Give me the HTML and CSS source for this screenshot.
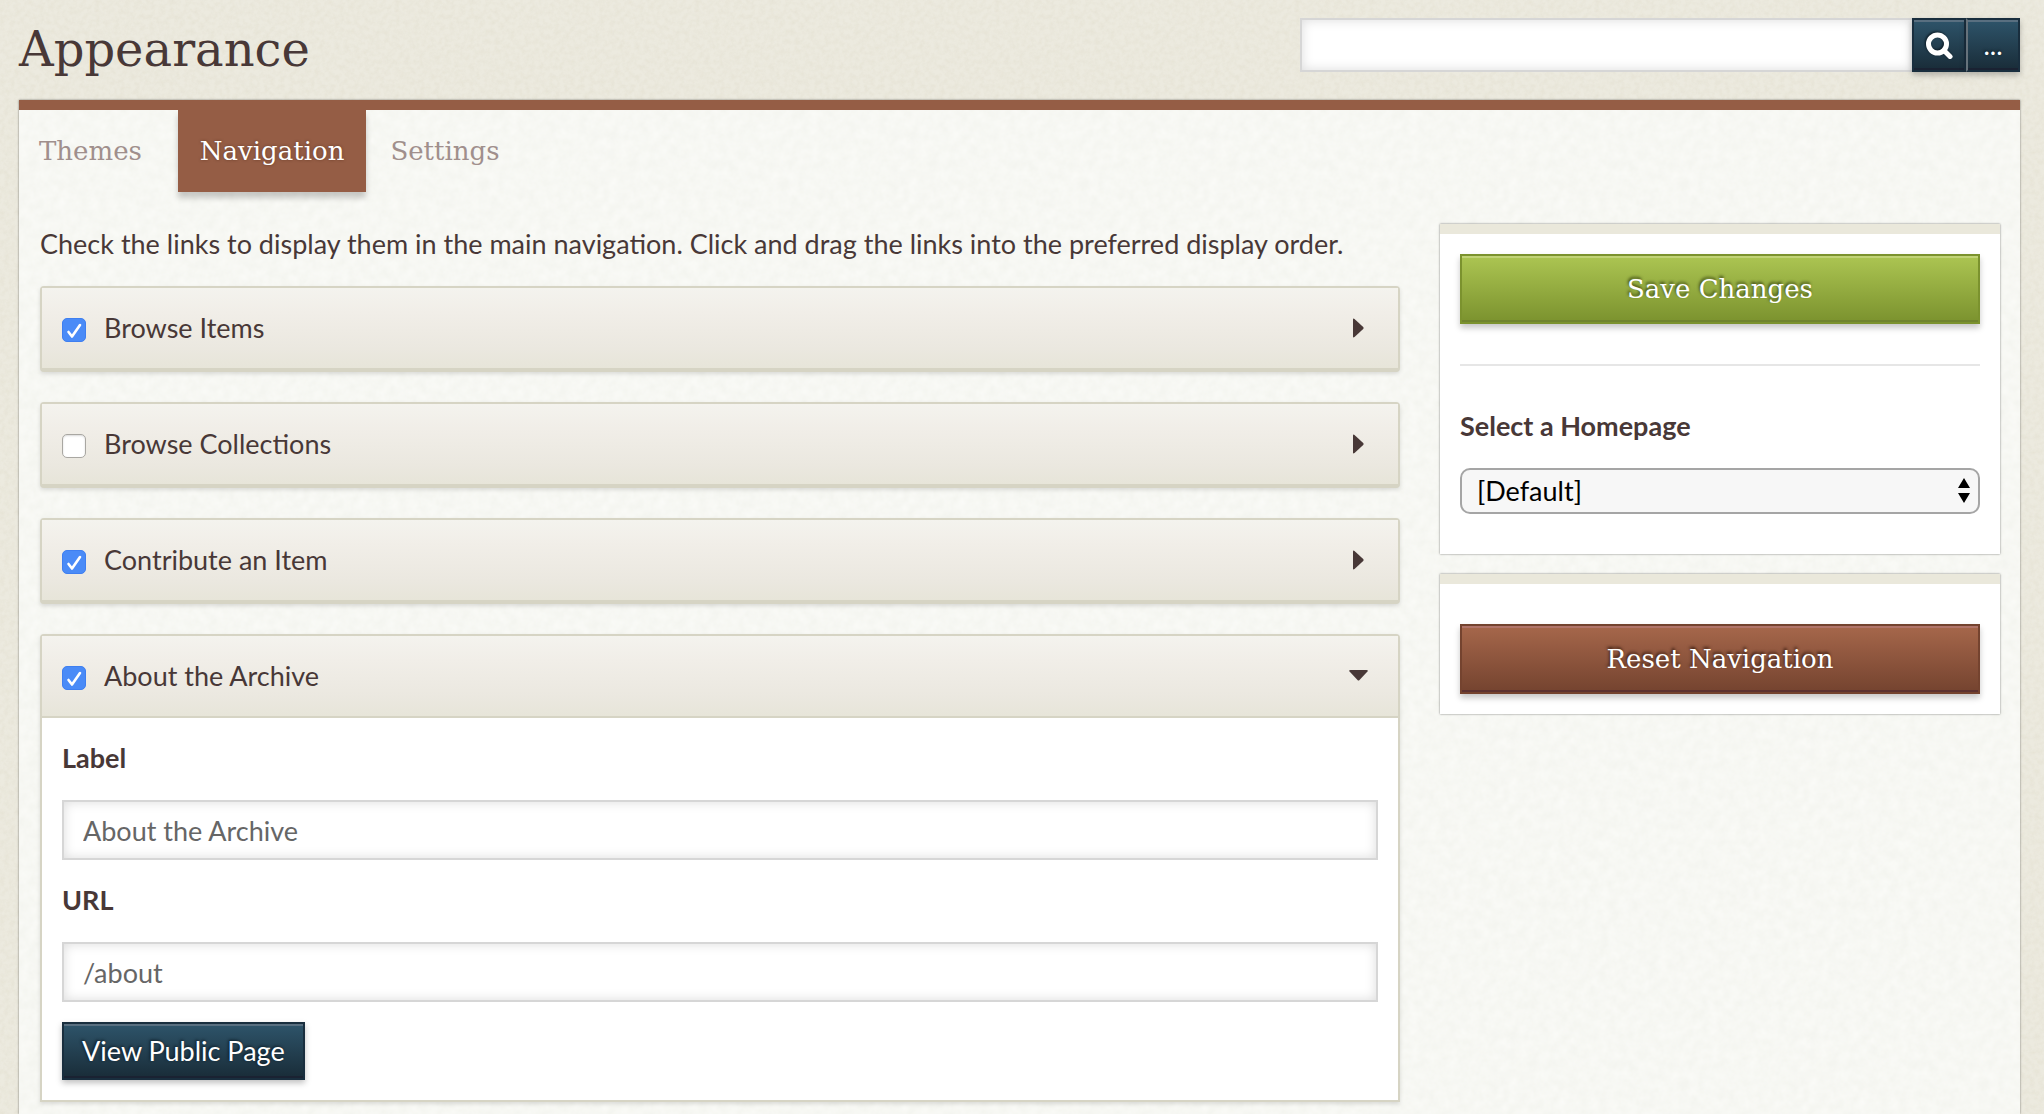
FILE: index.html
```html
<!DOCTYPE html>
<html lang="en">
<head>
<meta charset="utf-8">
<meta name="viewport" content="width=device-width, initial-scale=1">
<title>Appearance</title>
<link rel="stylesheet" href="styles.css">
</head>
<body>
<header class="page-header">
  <h1 class="page-title">Appearance</h1>
  <form class="search" role="search">
    <input class="text-input search-input" type="text" aria-label="Search">
    <button class="btn btn-blue search-btn" type="submit" aria-label="Submit search">
      <svg class="search-icon" viewBox="0 0 28 28" aria-hidden="true"><circle cx="12.500" cy="13" r="9" fill="none" stroke="currentColor" stroke-width="5"/><path d="M19 19.500 25 25.500" stroke="currentColor" stroke-width="5" stroke-linecap="round"/></svg>
    </button>
    <button class="btn btn-blue search-btn search-more" type="button" aria-label="Advanced search options">...</button>
  </form>
</header>

<main class="panel">
  <nav class="tabs">
    <a class="tab" href="#themes">Themes</a>
    <a class="tab tab-active" href="#navigation" aria-current="page">Navigation</a>
    <a class="tab" href="#settings">Settings</a>
  </nav>

  <div class="columns">
    <section class="links">
      <p class="intro">Check the links to display them in the main navigation. Click and drag the links into the preferred display order.</p>
      <ul class="link-list">
        <li class="link-item">
          <div class="link-head">
            <label class="link-label"><input class="check" type="checkbox" checked>Browse Items</label>
            <button class="toggle" type="button" aria-label="Expand Browse Items"><svg class="caret" viewBox="0 0 20 20" aria-hidden="true"><path d="M5 1.500Q5 0 6.500 1L15.200 9Q16.200 10 15.200 11L6.500 19Q5 20 5 18.500Z" fill="currentColor"/></svg></button>
          </div>
        </li>
        <li class="link-item">
          <div class="link-head">
            <label class="link-label"><input class="check" type="checkbox">Browse Collections</label>
            <button class="toggle" type="button" aria-label="Expand Browse Collections"><svg class="caret" viewBox="0 0 20 20" aria-hidden="true"><path d="M5 1.500Q5 0 6.500 1L15.200 9Q16.200 10 15.200 11L6.500 19Q5 20 5 18.500Z" fill="currentColor"/></svg></button>
          </div>
        </li>
        <li class="link-item">
          <div class="link-head">
            <label class="link-label"><input class="check" type="checkbox" checked>Contribute an Item</label>
            <button class="toggle" type="button" aria-label="Expand Contribute an Item"><svg class="caret" viewBox="0 0 20 20" aria-hidden="true"><path d="M5 1.500Q5 0 6.500 1L15.200 9Q16.200 10 15.200 11L6.500 19Q5 20 5 18.500Z" fill="currentColor"/></svg></button>
          </div>
        </li>
        <li class="link-item link-open">
          <div class="link-head">
            <label class="link-label"><input class="check" type="checkbox" checked>About the Archive</label>
            <button class="toggle" type="button" aria-label="Collapse About the Archive" aria-expanded="true"><svg class="caret" viewBox="0 0 20 20" aria-hidden="true"><path d="M2.500 4H18.500Q20.500 4 19.500 5.500L11.500 14Q10.500 15 9.500 14L1.500 5.500Q.5 4 2.500 4Z" fill="currentColor"/></svg></button>
          </div>
          <div class="link-body">
            <label class="field-label" for="link-text">Label</label>
            <input class="text-input" id="link-text" type="text" value="About the Archive">
            <label class="field-label" for="link-url">URL</label>
            <input class="text-input" id="link-url" type="text" value="/about">
            <a class="btn btn-blue view-btn" href="/about">View Public Page</a>
          </div>
        </li>
      </ul>
    </section>

    <aside class="sidebar">
      <section class="card">
        <button class="btn btn-wide btn-green" type="submit">Save Changes</button>
        <hr class="divider">
        <label class="field-label" for="homepage">Select a Homepage</label>
        <div class="select-wrap">
          <select class="select" id="homepage"><option>[Default]</option></select>
          <svg class="select-arrows" viewBox="0 0 12 26" aria-hidden="true"><path d="M0 10 6 0 12 10ZM0 15H12L6 25Z"/></svg>
        </div>
      </section>
      <section class="card card-reset">
        <button class="btn btn-wide btn-red" type="button">Reset Navigation</button>
      </section>
    </aside>
  </div>
</main>
</body>
</html>
```
FILE: styles.css
```css
* { box-sizing: border-box; }

:root {
  --ink: #483837;
  --brown: #955d45;
  --sand: #d6d4c4;
  --slab: "DejaVu Serif", serif;
  --sans: Lato, sans-serif;
}

body {
  margin: 0;
  min-height: 100vh;
  display: flex;
  flex-direction: column;
  color: var(--ink);
  font: 27px/40px var(--sans);
  background: #eceadf url("data:image/svg+xml,%3Csvg xmlns='http://www.w3.org/2000/svg' width='300' height='300'%3E%3Cfilter id='n' x='0' y='0' width='100%25' height='100%25'%3E%3CfeTurbulence type='fractalNoise' baseFrequency='.2' numOctaves='3' stitchTiles='stitch'/%3E%3CfeColorMatrix values='0 0 0 0 .6 0 0 0 0 .55 0 0 0 0 .4 .3 0 0 0 -.1'/%3E%3C/filter%3E%3Crect width='300' height='300' filter='url(%23n)'/%3E%3C/svg%3E");
}

/* Header */
.page-header {
  display: flex;
  align-items: flex-start;
  justify-content: space-between;
  padding: 18px 24px 20px 19px;
}
.page-title {
  margin: 0;
  font: 400 48px/62px var(--slab);
}
.search {
  display: flex;
  width: 36%;
  height: 54px;
}
.text-input {
  display: block;
  width: 100%;
  height: 60px;
  padding: 0 19px;
  border: 2px solid #d6d6d6;
  border-radius: 0;
  background: #fff;
  box-shadow: inset 0 0 12px rgba(0, 0, 0, .14);
  color: #666;
  font: 27px/40px var(--sans);
}
.search-input {
  flex: 1;
  min-width: 0;
  height: 54px;
  border-right: 0;
}

/* Buttons */
.btn {
  display: flex;
  align-items: center;
  justify-content: center;
  border: 2px solid;
  border-radius: 0;
  color: #fff;
  text-decoration: none;
  cursor: pointer;
}
.btn-blue {
  border-color: #192e3e;
  background: linear-gradient(#2e546a, #192c38);
  box-shadow: inset 0 2px #596f80, inset 0 -2px #1a2232, 0 3px 6px rgba(0, 0, 0, .25);
  text-shadow: -1px -1px 3px #0b1a24;
}
.btn-green {
  border-color: #7b922e;
  background: linear-gradient(#acc552, #7b922e);
  box-shadow: inset 0 2px #c1d377, inset 0 -2px #6f832e, 0 4px 6px rgba(0, 0, 0, .22);
  text-shadow: -1px -2px 3px #3c4914;
}
.btn-red {
  border-color: #74432f;
  background: linear-gradient(#a6674b, #74432f);
  box-shadow: inset 0 2px #b1756a, inset 0 -2px #5c3230, 0 4px 6px rgba(0, 0, 0, .22);
  text-shadow: -1px -2px 3px #3c1f13;
}
.btn-wide {
  width: 100%;
  height: 70px;
  font: 26px/40px var(--slab);
}
.search-btn {
  width: 54px;
  padding: 0;
  font: 27px/40px var(--sans);
}
.search-more { border-left-color: #66727b; }
.search-icon {
  width: 28px;
  height: 28px;
  filter: drop-shadow(-1px -1px 1px #0b1a24);
}
.view-btn {
  width: fit-content;
  height: 58px;
  margin-top: 20px;
  padding: 0 18px;
}

/* Panel and tabs */
.panel {
  flex: 1;
  margin: 0 24px 0 19px;
  padding-bottom: 12px;
  border-top: 10px solid var(--brown);
  background: #f4f5f0 url("data:image/svg+xml,%3Csvg xmlns='http://www.w3.org/2000/svg' width='300' height='300'%3E%3Cfilter id='n' x='0' y='0' width='100%25' height='100%25'%3E%3CfeTurbulence type='fractalNoise' baseFrequency='.1' numOctaves='3' stitchTiles='stitch'/%3E%3CfeColorMatrix values='0 0 0 0 1 0 0 0 0 1 0 0 0 0 .98 .8 0 0 0 -.15'/%3E%3C/filter%3E%3Crect width='300' height='300' filter='url(%23n)'/%3E%3C/svg%3E");
  box-shadow: 0 0 2px rgba(0, 0, 0, .5);
}
.tabs {
  display: flex;
  margin-left: -4px;
}
.tab {
  padding: 0 24px;
  color: #a08f8c;
  font: 26px/82px var(--slab);
  text-decoration: none;
}
.tab-active {
  margin-left: 12px;
  padding: 0 22px;
  background: var(--brown);
  color: #fff;
  box-shadow: 0 6px 6px rgba(0, 0, 0, .2);
  text-shadow: 0 0 3px rgba(60, 25, 10, .5);
}

.columns {
  display: grid;
  grid-template-columns: minmax(0, 17fr) minmax(0, 7fr);
  align-items: start;
  gap: 40px;
  padding: 32px 20px 0 21px;
}

/* Navigation links */
.intro { margin: 0 0 22px; }
.link-list {
  display: grid;
  gap: 30px;
  margin: 0;
  padding: 0;
  list-style: none;
}
.link-item {
  border: 2px solid var(--sand);
  border-radius: 4px;
  background: #fff;
  box-shadow: 0 2px 4px rgba(0, 0, 0, .12);
}
.link-head {
  display: flex;
  align-items: center;
  justify-content: space-between;
  height: 82px;
  padding: 0 30px 0 20px;
  border-bottom: 2px solid var(--sand);
  background: linear-gradient(#f4f3ee, #f1eee8 30%, #ebe8e0 75%, #e7e5d9);
}
.link-open {
  border-radius: 4px 4px 0 0;
}
.link-label {
  display: flex;
  align-items: center;
  gap: 18px;
}
.check {
  flex: none;
  appearance: none;
  width: 24px;
  height: 24px;
  margin: 4px 0 0;
  border: 1px solid #a9a7a2;
  border-radius: 5px;
  background: #fff;
  box-shadow: inset 0 1px 2px rgba(0, 0, 0, .15);
}
.check:checked {
  border-color: #3f7ff0;
  background: #4a8bf7 url("data:image/svg+xml,%3Csvg xmlns='http://www.w3.org/2000/svg' viewBox='0 0 22 22'%3E%3Cpath d='M5.500 13 9 17.500 17 6' fill='none' stroke='%23fff' stroke-width='2.600' stroke-linecap='round' stroke-linejoin='round'/%3E%3C/svg%3E");
  box-shadow: none;
}
.toggle {
  display: flex;
  padding: 0;
  border: 0;
  background: none;
  color: var(--ink);
  cursor: pointer;
}
.caret {
  width: 20px;
  height: 20px;
}
.link-body {
  padding: 20px;
}
.field-label {
  display: block;
  margin-bottom: 22px;
  font-weight: 700;
}
.text-input + .field-label { margin-top: 20px; }

/* Sidebar */
.sidebar {
  display: grid;
  gap: 20px;
}
.card {
  padding: 20px 20px 40px;
  border-top: 10px solid #eae8db;
  background: #fff;
  box-shadow: 0 0 2px rgba(0, 0, 0, .5);
}
.card-reset { padding: 40px 20px 20px; }
.divider {
  height: 2px;
  margin: 40px 0;
  border: 0;
  background: #e6e6e6;
}
.select-wrap { position: relative; }
.select {
  display: block;
  appearance: none;
  width: 100%;
  height: 46px;
  padding: 0 15px;
  border: 2px solid #a5a5a5;
  border-radius: 10px;
  background: #f7f7f7;
  color: #000;
  font: 27px/40px var(--sans);
}
.select-arrows {
  position: absolute;
  top: 10px;
  right: 10px;
  width: 12px;
  height: 26px;
  pointer-events: none;
}
```
